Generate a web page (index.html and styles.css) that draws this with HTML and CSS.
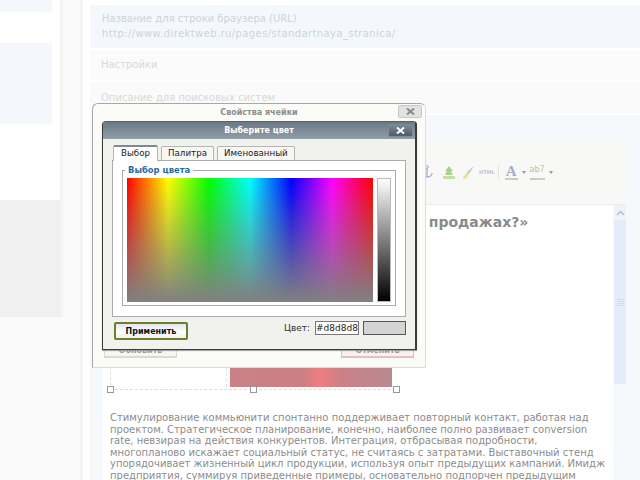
FILE: index.html
```html
<!DOCTYPE html>
<html lang="ru">
<head>
  <meta charset="UTF-8">
  <title>Выберите цвет</title>
  <link rel="stylesheet" href="styles.css">
</head>
<body>
  <div class="side">
    <div class="side-blue side-blue-top"></div>
    <div class="side-blue side-blue-mid"></div>
    <div class="side-grey"></div>
  </div>
  <div class="gutter"></div>

  <div class="main">
    <div class="row row-url">
      <div>Название для строки браузера (URL)</div>
      <div class="row-link">http://www.direktweb.ru/pages/standartnaya_stranica/</div>
    </div>
    <div class="row row-settings">Настройки</div>
    <div class="row row-desc">Описание для поисковых систем</div>

    <div class="panel">
      <div class="toolbar">
        <!-- anchor -->
        <svg class="tool tool-anchor" width="12" height="14" viewBox="0 0 12 14"><path d="M6 3v9M1 8c0 3 3 4 5 4s5-1 5-4" fill="none" stroke="#a9b4d4" stroke-width="1.400"/><circle cx="6" cy="2" r="1.400" fill="none" stroke="#a9b4d4"/></svg>
        <!-- image -->
        <svg class="tool tool-image" width="12" height="13" viewBox="0 0 12 13"><rect y="10" width="12" height="3" fill="#c4dfa8"/><path d="M6 0l4 5H8l2 4H2l2-4H2z" fill="#a9d48b"/></svg>
        <!-- cleanup brush -->
        <svg class="tool tool-brush" width="14" height="13" viewBox="0 0 14 13"><path d="M13 0L6 6l2 2z" fill="#c9c9c9"/><path d="M6 6l2 2-3 5-4-1c2-1 3-3 5-6z" fill="#eedd9a"/></svg>
        <span class="tool-html">HTML</span>
        <span class="tool-sep"></span>
        <span class="tool-font">A</span>
        <span class="tool-arrow"></span>
        <span class="tool-mark">ab<span class="tool-mark-tail">7</span></span>
        <span class="tool-arrow"></span>
      </div>
      <div class="editor">
        <div class="editor-text">
          <h2 class="headline">в продажах?»</h2>
          <div class="cell">
            <div class="cell-image"></div>
            <span class="handle handle-left"></span>
            <span class="handle handle-mid"></span>
            <span class="handle handle-right"></span>
          </div>
          <p class="copy">Стимулирование коммьюнити спонтанно поддерживает повторный контакт, работая над проектом. Стратегическое планирование, конечно, наиболее полно развивает conversion rate, невзирая на действия конкурентов. Интеграция, отбрасывая подробности, многопланово искажает социальный статус, не считаясь с затратами. Выставочный стенд упорядочивает жизненный цикл продукции, используя опыт предыдущих кампаний. Имидж предприятия, суммируя приведенные примеры, основательно подпорчен предыдущим</p>
        </div>
        <div class="scrollbar">
          <div class="scroll-up">
            <svg width="9" height="6" viewBox="0 0 9 6"><path d="M1 5l3.500-3.500L8 5" fill="none" stroke="#b4bdca" stroke-width="1.500"/></svg>
          </div>
          <div class="scroll-thumb">
            <span class="scroll-grip"></span>
          </div>
        </div>
      </div>
    </div>
  </div>

  <!-- cell properties window, mostly covered by the colour picker -->
  <div class="win-back">
    <div class="win-back-title">
      <span>Свойства ячейки</span>
      <span class="win-back-close">
        <svg width="9" height="7" viewBox="0 0 9 7"><path d="M1 .5l7 6M8 .5l-7 6" stroke="#8a8a8a" stroke-width="2"/></svg>
      </span>
    </div>
    <div class="win-back-foot">
      <span class="back-btn back-btn-ok">Обновить</span>
      <span class="back-btn back-btn-cancel">Отменить</span>
    </div>
  </div>

  <div class="win">
    <div class="win-title">
      <span>Выберите цвет</span>
      <span class="win-close">
        <svg width="9" height="7" viewBox="0 0 9 7"><path d="M1 .5l7 6M8 .5l-7 6" stroke="#fff" stroke-width="2"/></svg>
      </span>
    </div>
    <div class="win-body">
      <div class="tabs">
        <span class="tab tab-active">Выбор</span>
        <span class="tab">Палитра</span>
        <span class="tab">Именованный</span>
      </div>
      <div class="tab-panel">
        <fieldset class="group">
          <legend>Выбор цвета</legend>
          <div class="picker">
            <div class="spectrum"></div>
            <div class="lightness"></div>
          </div>
        </fieldset>
      </div>
      <div class="foot">
        <button class="apply">Применить</button>
        <div class="color-field">
          <span class="color-label">Цвет:</span>
          <span class="color-input">#d8d8d8</span>
          <span class="color-swatch"></span>
        </div>
      </div>
    </div>
  </div>
</body>
</html>
```

FILE: styles.css
```css
html, body {
  margin: 0;
  padding: 0;
  width: 640px;
  height: 480px;
  overflow: hidden;
}

body {
  display: flex;
  font-family: "DejaVu Sans", Verdana, sans-serif;
  background-color: #fafafa;
}

/* faded page behind the windows */
.side {
  width: 60px;
  flex: none;
  height: 317px;
  background-color: #fff;
  border-right: 3px solid #f4f4f4;
}

.side-blue {
  width: 52px;
  background-color: #f4f8fc;
}

.side-blue-top {
  height: 12px;
  margin-bottom: 31px;
}

.side-blue-mid {
  height: 81px;
  margin-bottom: 76px;
}

.side-grey {
  width: 60px;
  height: 117px;
  background-color: #f0f0f0;
}

.gutter {
  width: 17px;
  flex: none;
  background-color: #fafafa;
  border-right: 3px solid #f3f3f3;
}

.main {
  flex: 1;
  min-width: 0;
  background-color: #fff;
  padding: 5px 0 0 7px;
}

.row {
  font-size: 10px;
  color: #ced4d8;
  padding-left: 11px;
  margin-bottom: 2px;
}

.row-url {
  height: 43px;
  box-sizing: border-box;
  padding: 6px 0 0 12px;
  line-height: 15px;
  background-color: #f4f8fc;
}

.row-link {
  letter-spacing: .4px;
}

.row-settings {
  height: 30px;
  line-height: 30px;
  color: #d8d8d8;
  background-color: #fbfbfb;
}

.row-desc {
  height: 31px;
  line-height: 32px;
  color: #d8d8d8;
  background-color: #fafafa;
}

.panel {
  background-color: #f5f9fc;
  padding: 25px 13px 0;
  height: 365px;
  box-sizing: border-box;
}

.toolbar {
  height: 65px;
  box-sizing: border-box;
  background-color: #f8f8f6;
  border-bottom: 1px solid #ececec;
  display: flex;
  align-items: center;
  justify-content: flex-start;
  padding: 0 0 0 318px;
}

.tool {
  flex: none;
}

.tool-anchor {
  margin-right: 10px;
}

.tool-image {
  margin-right: 6px;
}

.tool-brush {
  margin-right: 5px;
}

.tool-html {
  font-size: 5px;
  font-weight: bold;
  color: #bcc5d0;
  margin: 0 3px 0 -1px;
}

.tool-sep {
  width: 1px;
  height: 14px;
  background-color: #e3e3e3;
  margin-right: 6px;
}

.tool-font {
  font-family: "Liberation Serif", serif;
  font-size: 15px;
  font-weight: bold;
  color: #a6aecd;
  border-bottom: 2px solid #ccc;
  line-height: 14px;
  padding: 0 1px;
}

.tool-mark {
  font-size: 8px;
  color: #b9c48a;
  border-bottom: 2px solid #ccc;
  line-height: 12px;
  padding-bottom: 2px;
}

.tool-mark-tail {
  color: #dcc77a;
}

.tool-arrow {
  width: 0;
  height: 0;
  border: 2px solid transparent;
  border-top: 3px solid #999;
  border-bottom: 0;
  margin: 0 4px 0 4px;
}

.editor {
  display: flex;
  height: 275px;
}

.editor-text {
  width: 510px;
  flex: none;
  background-color: #fff;
  padding: 8px 0 0 7px;
  box-sizing: border-box;
}

.headline {
  margin: 0;
  height: 18px;
  font-size: 14px;
  line-height: 18px;
  color: #8a8a8a;
  padding-left: 305px;
  white-space: nowrap;
}

.cell {
  position: relative;
  height: 159px;
  width: 286px;
  box-sizing: border-box;
  border-bottom: 1px dashed #ddd;
  border-left: 1px dashed #e4e4e4;
  display: flex;
  justify-content: flex-end;
  align-items: flex-end;
  padding: 0 4px 2px 0;
}

.cell-image {
  width: 166px;
  height: 20px;
  box-sizing: border-box;
  padding-left: 3px;
  border-left: 1px dashed #e4e4e4;
  background: linear-gradient(to right, #c98187, #cc7f85 45%, #ee7f80 55%, #c98187 70%, #b98a90) content-box;
}

.handle {
  position: absolute;
  bottom: -4px;
  width: 5px;
  height: 5px;
  background-color: #fff;
  border: 1px solid #999;
}

.handle-left {
  left: -4px;
}

.handle-mid {
  left: 139px;
}

.handle-right {
  right: -4px;
}

.copy {
  margin: 22px 0 0;
  font-size: 10px;
  line-height: 11.600px;
  color: #8c8c8c;
}

.scrollbar {
  width: 12px;
  margin-left: 1px;
}

.scroll-up {
  height: 15px;
  background-color: #eef2f9;
  display: flex;
  align-items: center;
  justify-content: center;
}

.scroll-thumb {
  height: 164px;
  background-color: #e4ecfa;
  display: flex;
  align-items: center;
  justify-content: center;
}

.scroll-grip {
  width: 7px;
  height: 7px;
  background: repeating-linear-gradient(to bottom, #d2dbec 0, #d2dbec 1px, transparent 1px, transparent 2px);
}

/* back window */
.win-back {
  position: absolute;
  left: 92px;
  top: 103px;
  width: 334px;
  height: 265px;
  box-sizing: border-box;
  background-color: #fbfbf8;
  border: 1px solid #a8a8a8;
  border-bottom-color: #ddd;
  border-right-color: #ddd;
  border-radius: 6px 6px 0 0;
  display: flex;
  flex-direction: column;
  justify-content: space-between;
}

.win-back-title {
  position: relative;
  height: 17px;
  text-align: center;
  font-size: 8px;
  font-weight: bold;
  line-height: 18px;
  color: #8d8d8d;
}

.win-back-close {
  position: absolute;
  right: 3px;
  top: 1px;
  width: 24px;
  height: 13px;
  box-sizing: border-box;
  border: 1px solid #c8c8c8;
  border-radius: 2px;
  background-color: #e2e3e1;
  display: flex;
  align-items: center;
  justify-content: center;
}

.win-back-foot {
  display: flex;
  justify-content: space-between;
  padding: 0 11px 9px;
}

.back-btn {
  width: 73px;
  height: 18px;
  box-sizing: border-box;
  text-align: center;
  font-size: 8px;
  font-weight: bold;
  line-height: 20px;
  color: #999;
  background-color: #f6f6f4;
  border: 1px solid #d8dccb;
  border-bottom-width: 2px;
}

.back-btn-cancel {
  background-color: #fbf0f0;
  border-color: #e6c0c0;
}

/* colour picker window */
.win {
  position: absolute;
  left: 102px;
  top: 121px;
  width: 315px;
  height: 229px;
  box-sizing: border-box;
  background-color: #f1f1ee;
  border: 1px solid #3c3c3c;
  border-top-color: #55636e;
  border-right-width: 2px;
  border-radius: 4px 4px 0 0;
  box-shadow: 0 1px 1px #999;
}

.win-title {
  position: relative;
  height: 17px;
  text-align: center;
  font-size: 8px;
  font-weight: bold;
  line-height: 18px;
  color: #fff;
  background: linear-gradient(to bottom, #6a7985, #8f9ea8);
}

.win-close {
  position: absolute;
  right: 2px;
  top: 2px;
  width: 25px;
  height: 13px;
  border-radius: 2px;
  background: linear-gradient(to bottom, #7c8a96, #4d5c68);
  border: 1px solid #7c8a96;
  box-sizing: border-box;
  display: flex;
  align-items: center;
  justify-content: center;
}

.win-body {
  padding: 6px 9px 0;
}

.tabs {
  display: flex;
  gap: 3px;
  height: 15px;
  padding-left: 1px;
  position: relative;
  z-index: 1;
}

.tab {
  box-sizing: border-box;
  height: 14px;
  margin-top: 1px;
  padding: 0 6px;
  font-size: 8.700px;
  line-height: 13px;
  color: #222;
  background-color: #f7f7f4;
  border: 1px solid #b5b5b5;
  border-bottom: 0;
  border-radius: 2px 2px 0 0;
}

.tab-active {
  height: 16px;
  margin-top: 0;
  padding: 0 7px;
  background-color: #fff;
  border-top: 2px solid #7d8a96;
}

.tab-panel {
  box-sizing: border-box;
  width: 294px;
  height: 157px;
  padding: 4px 9px 10px;
  background-color: #fff;
  border: 1px solid #aaa;
}

.group {
  margin: 0;
  padding: 3px 4px 3px;
  min-width: 0;
  height: 141px;
  box-sizing: border-box;
  border: 1px solid #aaa;
}

.group legend {
  margin-left: -2px;
  padding: 0 3px;
  font-size: 8.400px;
  font-weight: bold;
  line-height: 10px;
  color: #2b6aa0;
}

.picker {
  display: flex;
  gap: 4px;
  height: 124px;
}

.spectrum {
  width: 246px;
  flex: none;
  background:
    linear-gradient(to bottom, rgba(128, 128, 128, 0), #808080),
    linear-gradient(to right, #f00, #ff0, #0f0, #0ff, #00f, #f0f, #f00);
}

.lightness {
  width: 14px;
  flex: none;
  box-sizing: border-box;
  border: 1px solid #bbb;
  background: linear-gradient(to bottom, #fff, #000);
}

.foot {
  display: flex;
  justify-content: space-between;
  align-items: flex-start;
  padding: 5px 0 0 2px;
  width: 294px;
  box-sizing: border-box;
}

.apply {
  width: 74px;
  height: 18px;
  padding: 0;
  font-family: "DejaVu Sans", Verdana, sans-serif;
  font-size: 8px;
  font-weight: bold;
  color: #111;
  background: linear-gradient(to bottom, #e4e6ee, #fff 60%, #eee);
  border: 2px solid #6f7d2f;
  border-radius: 2px;
}

.color-field {
  display: flex;
  align-items: center;
  gap: 4px;
  margin-top: -1px;
}

.color-label {
  font-size: 9px;
  color: #333;
  margin-right: 1px;
}

.color-input {
  box-sizing: border-box;
  width: 44px;
  height: 14px;
  font-size: 9px;
  line-height: 12px;
  text-align: center;
  color: #222;
  background-color: #fff;
  border: 1px solid #777;
}

.color-swatch {
  box-sizing: border-box;
  width: 43px;
  height: 14px;
  background-color: #d4d4d4;
  border: 1px solid #555;
}
```
